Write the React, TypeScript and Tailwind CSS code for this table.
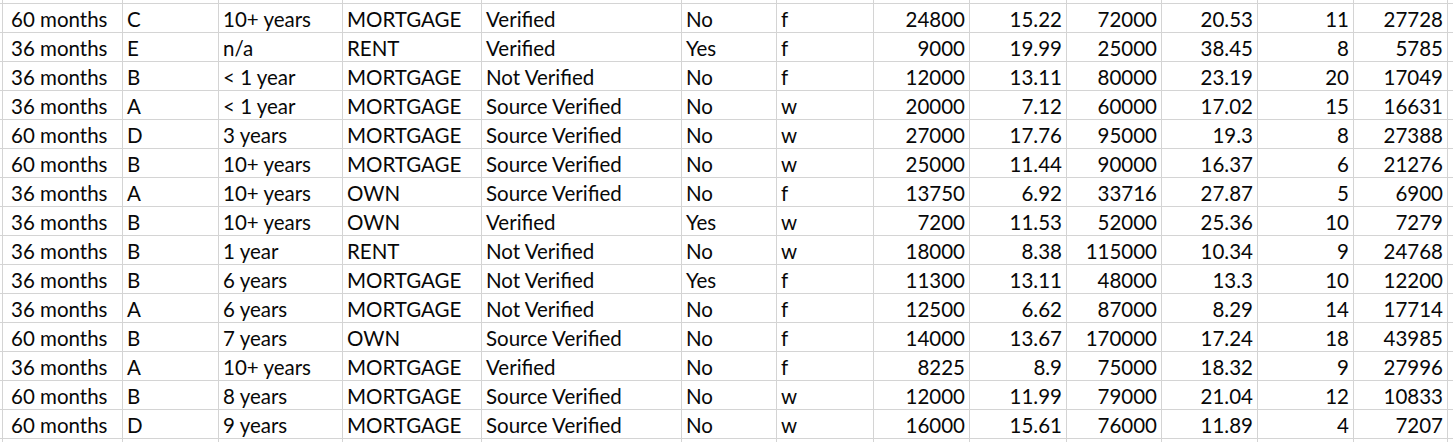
import React from 'react';

const rows: string[][] = [
  ['60 months', 'C', '10+ years', 'MORTGAGE', 'Verified', 'No', 'f', '24800', '15.22', '72000', '20.53', '11', '27728'],
  ['36 months', 'E', 'n/a', 'RENT', 'Verified', 'Yes', 'f', '9000', '19.99', '25000', '38.45', '8', '5785'],
  ['36 months', 'B', '< 1 year', 'MORTGAGE', 'Not Verified', 'No', 'f', '12000', '13.11', '80000', '23.19', '20', '17049'],
  ['36 months', 'A', '< 1 year', 'MORTGAGE', 'Source Verified', 'No', 'w', '20000', '7.12', '60000', '17.02', '15', '16631'],
  ['60 months', 'D', '3 years', 'MORTGAGE', 'Source Verified', 'No', 'w', '27000', '17.76', '95000', '19.3', '8', '27388'],
  ['60 months', 'B', '10+ years', 'MORTGAGE', 'Source Verified', 'No', 'w', '25000', '11.44', '90000', '16.37', '6', '21276'],
  ['36 months', 'A', '10+ years', 'OWN', 'Source Verified', 'No', 'f', '13750', '6.92', '33716', '27.87', '5', '6900'],
  ['36 months', 'B', '10+ years', 'OWN', 'Verified', 'Yes', 'w', '7200', '11.53', '52000', '25.36', '10', '7279'],
  ['36 months', 'B', '1 year', 'RENT', 'Not Verified', 'No', 'w', '18000', '8.38', '115000', '10.34', '9', '24768'],
  ['36 months', 'B', '6 years', 'MORTGAGE', 'Not Verified', 'Yes', 'f', '11300', '13.11', '48000', '13.3', '10', '12200'],
  ['36 months', 'A', '6 years', 'MORTGAGE', 'Not Verified', 'No', 'f', '12500', '6.62', '87000', '8.29', '14', '17714'],
  ['60 months', 'B', '7 years', 'OWN', 'Source Verified', 'No', 'f', '14000', '13.67', '170000', '17.24', '18', '43985'],
  ['36 months', 'A', '10+ years', 'MORTGAGE', 'Verified', 'No', 'f', '8225', '8.9', '75000', '18.32', '9', '27996'],
  ['60 months', 'B', '8 years', 'MORTGAGE', 'Source Verified', 'No', 'w', '12000', '11.99', '79000', '21.04', '12', '10833'],
  ['60 months', 'D', '9 years', 'MORTGAGE', 'Source Verified', 'No', 'w', '16000', '15.61', '76000', '11.89', '4', '7207'],
];

const cols =
  'grid-cols-[3px_120px_96px_124px_139px_200px_95px_97px_96px_97px_95px_96px_96px_94px_1fr]';

// edge slivers: part of the neighbouring rows / columns that peek in
const EdgeRow = ({ h, last }: { h: string; last?: boolean }) => (
  <>
    {Array.from({ length: 15 }).map((_, i) => (
      <div
        key={i}
        className={`${h} ${i < 14 ? 'border-r' : ''} ${last ? '' : 'border-b'} border-[#d4d4d4]`}
      />
    ))}
  </>
);

const App = () => {
  return (
    <div
      className="w-[1453px] h-[442px] overflow-hidden bg-white text-[#080808]"
      style={{ fontFamily: 'Lato, "Open Sans", sans-serif' }}
    >
      <div className={`grid ${cols}`}>
        <EdgeRow h="h-[4px]" />
        {rows.map((row, r) => (
          <React.Fragment key={r}>
            <div className="h-[29px] border-r border-b border-[#d4d4d4]" />
            {row.map((cell, c) => (
              <div
                key={c}
                className={`h-[29px] border-r border-b border-[#d4d4d4] flex items-end pb-[2px] text-[20.5px] leading-[21px] whitespace-nowrap overflow-hidden ${
                  c < 7 ? 'justify-start' : 'justify-end pr-[4px]'
                } ${c === 0 ? 'pl-[8px]' : c < 7 ? 'pl-[4px]' : ''}`}
              >
                {cell}
              </div>
            ))}
            <div className="h-[29px] border-b border-[#d4d4d4]" />
          </React.Fragment>
        ))}
        <EdgeRow h="h-[3px]" last />
      </div>
    </div>
  );
};

export default App;
